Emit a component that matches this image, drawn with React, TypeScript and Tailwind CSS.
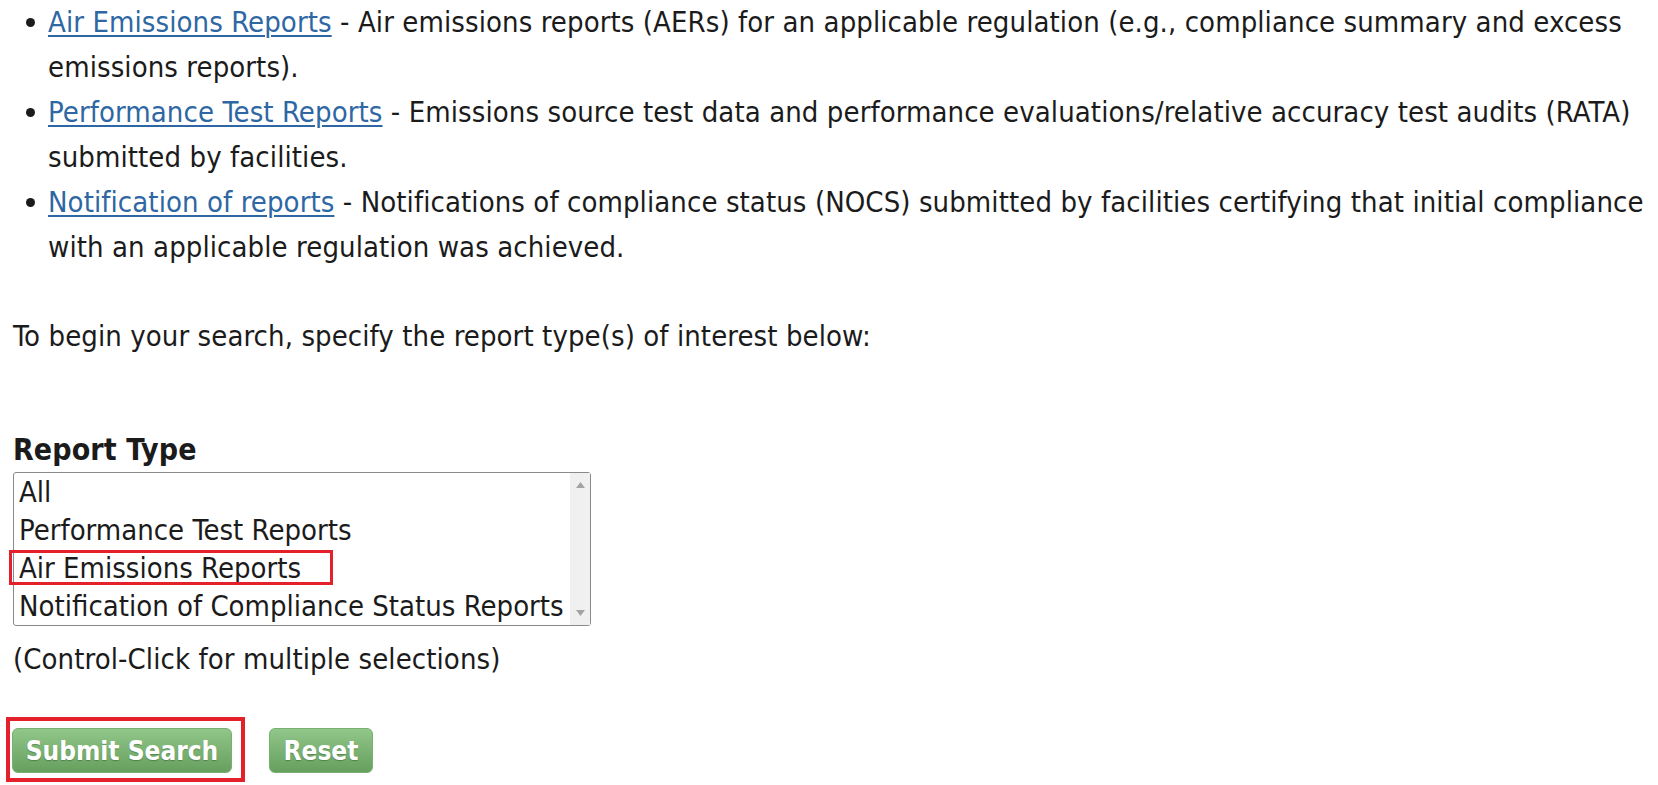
import React from 'react';

const font = { fontFamily: '"DejaVu Sans Condensed", "DejaVu Sans", sans-serif' };

const reportTypes = [
  'All',
  'Performance Test Reports',
  'Air Emissions Reports',
  'Notification of Compliance Status Reports',
];

const ReportItem: React.FC<{ link: string; children: React.ReactNode }> = ({ link, children }) => (
  <li className="flex">
    <span className="w-[35px] shrink-0 flex justify-center">
      <span className="mt-[18px] w-[9px] h-[9px] rounded-full bg-[#1b1b1b]" />
    </span>
    <p>
      <a href="#" className="text-[#2e67a3] underline decoration-[2px] underline-offset-[3px]">
        {link}
      </a>{' '}
      - {children}
    </p>
  </li>
);

const GreenButton: React.FC<{ label: string; className?: string }> = ({ label, className }) => (
  <button
    className={
      'h-[45px] rounded-[6px] border border-[#78b070] bg-gradient-to-b from-[#91c78a] to-[#669f5e] text-white font-bold text-[26px] leading-none [text-shadow:0_1px_1px_rgba(0,0,0,0.25)] ' +
      (className ?? '')
    }
  >
    {label}
  </button>
);

export default function App() {
  return (
    <div
      className="w-[1658px] h-[785px] overflow-hidden bg-white text-[#1b1b1b] text-[29px] leading-[45px] tracking-[0.08px] pl-[13px]"
      style={font}
    >
      {/* Report types */}
      <ul>
        <ReportItem link="Air Emissions Reports">
          Air emissions reports (AERs) for an applicable regulation (e.g., compliance summary and excess
          emissions reports).
        </ReportItem>
        <ReportItem link="Performance Test Reports">
          Emissions source test data and performance evaluations/relative accuracy test audits (RATA)
          submitted by facilities.
        </ReportItem>
        <ReportItem link="Notification of reports">
          Notifications of compliance status (NOCS) submitted by facilities certifying that initial
          compliance with an applicable regulation was achieved.
        </ReportItem>
      </ul>

      <p className="mt-[44px]">To begin your search, specify the report type(s) of interest below:</p>

      {/* Search form */}
      <div className="mt-[68px]">
        <h4 className="font-bold text-[30px]">Report Type</h4>
        <div className="relative flex w-[578px] h-[154px] border border-[#8a8a8a] rounded-[3px] bg-white tracking-normal">
          <div className="flex-1 pl-[5px]">
            {reportTypes.map((t) => (
              <div key={t} className="h-[38px] leading-[38px] whitespace-nowrap">
                {t}
              </div>
            ))}
          </div>
          <div className="w-[20px] bg-[#f0f0f0] flex flex-col justify-between items-center py-[9px]">
            <svg width="9" height="6" viewBox="0 0 9 6">
              <path d="M0 6 L4.5 0 L9 6 Z" fill="#a3a3a3" />
            </svg>
            <svg width="9" height="6" viewBox="0 0 9 6">
              <path d="M0 0 L4.5 6 L9 0 Z" fill="#a3a3a3" />
            </svg>
          </div>
          <div className="absolute left-[-5px] top-[77px] w-[324px] h-[35px] border-[3px] border-[#e4202a]" />
        </div>
        <p className="mt-[11px]">(Control-Click for multiple selections)</p>

        <div className="relative mt-[46px] flex gap-[37px] tracking-normal">
          <GreenButton label="Submit Search" className="w-[220px] -ml-[1px]" />
          <GreenButton label="Reset" className="w-[104px]" />
          <div className="absolute left-[-7px] top-[-11px] w-[239px] h-[65px] border-[4px] border-[#e4202a]" />
        </div>
      </div>
    </div>
  );
}
